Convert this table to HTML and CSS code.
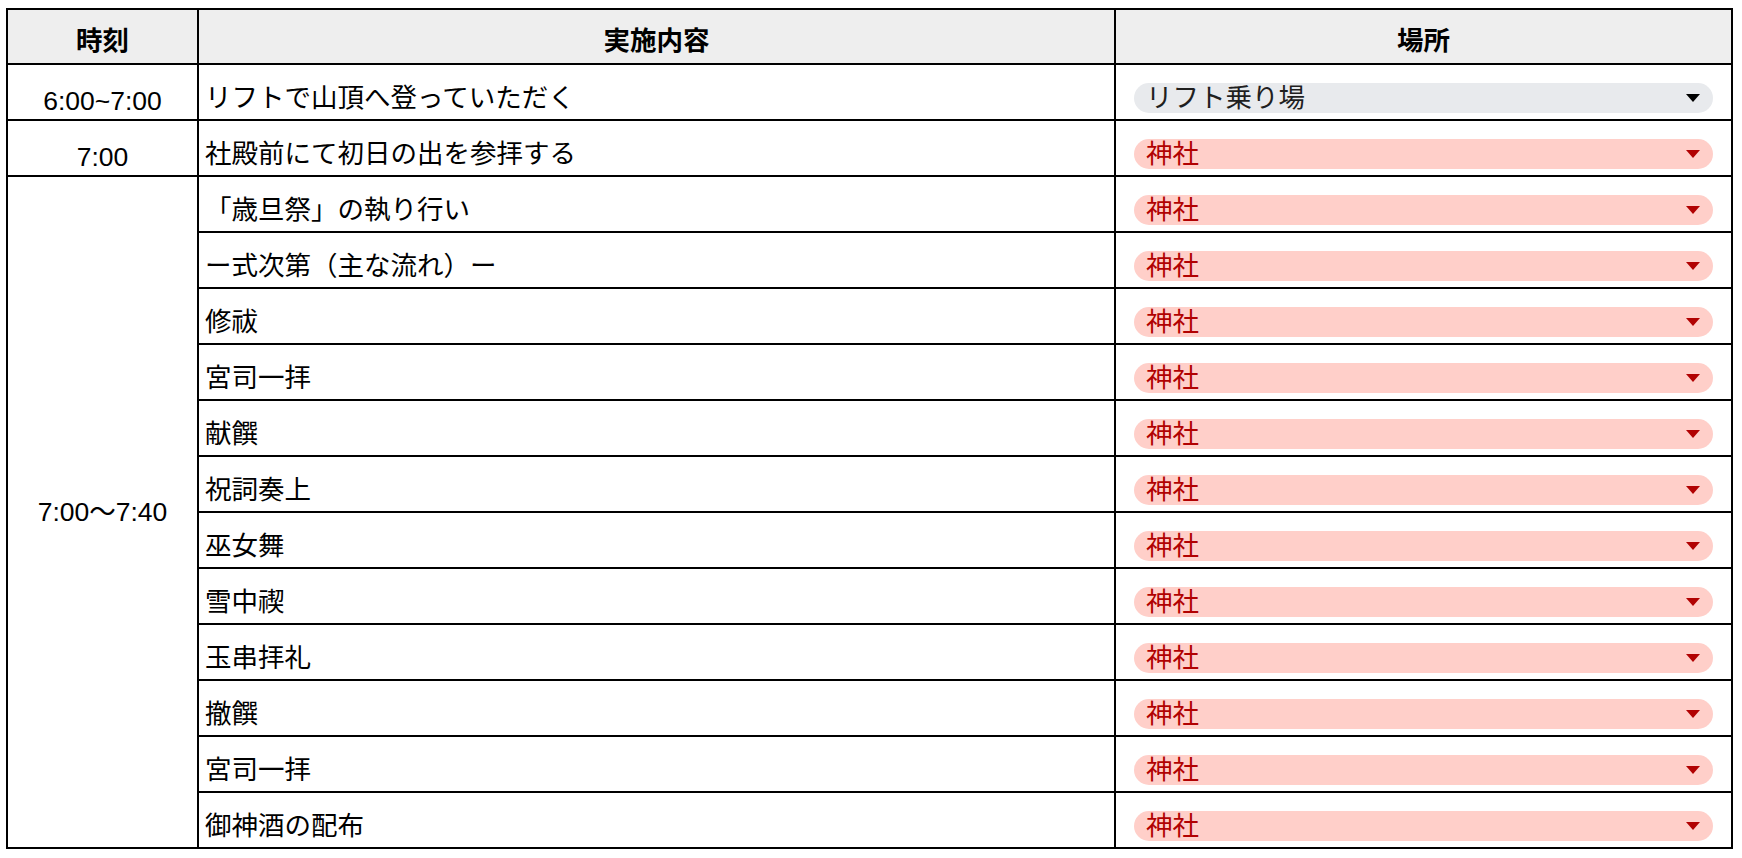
FILE: index.html
```html
<!DOCTYPE html>
<html lang="ja">
<head>
<meta charset="utf-8">
<title>スケジュール</title>
<link rel="stylesheet" href="styles.css">
</head>
<body>
<table class="schedule">
  <colgroup>
    <col class="c-time">
    <col class="c-content">
    <col class="c-place">
  </colgroup>
  <thead>
    <tr><th>時刻</th><th>実施内容</th><th>場所</th></tr>
  </thead>
  <tbody>
    <tr>
      <td class="time">6:00~7:00</td>
      <td class="content">リフトで山頂へ登っていただく</td>
      <td class="place"><div class="chip chip-grey"><span>リフト乗り場</span><i class="arrow"></i></div></td>
    </tr>
    <tr>
      <td class="time">7:00</td>
      <td class="content">社殿前にて初日の出を参拝する</td>
      <td class="place"><div class="chip chip-red"><span>神社</span><i class="arrow"></i></div></td>
    </tr>
    <tr>
      <td class="time time-span" rowspan="12">7:00〜7:40</td>
      <td class="content">「歳旦祭」の執り行い</td>
      <td class="place"><div class="chip chip-red"><span>神社</span><i class="arrow"></i></div></td>
    </tr>
    <tr>
      <td class="content">ー式次第（主な流れ）ー</td>
      <td class="place"><div class="chip chip-red"><span>神社</span><i class="arrow"></i></div></td>
    </tr>
    <tr>
      <td class="content">修祓</td>
      <td class="place"><div class="chip chip-red"><span>神社</span><i class="arrow"></i></div></td>
    </tr>
    <tr>
      <td class="content">宮司一拝</td>
      <td class="place"><div class="chip chip-red"><span>神社</span><i class="arrow"></i></div></td>
    </tr>
    <tr>
      <td class="content">献饌</td>
      <td class="place"><div class="chip chip-red"><span>神社</span><i class="arrow"></i></div></td>
    </tr>
    <tr>
      <td class="content">祝詞奏上</td>
      <td class="place"><div class="chip chip-red"><span>神社</span><i class="arrow"></i></div></td>
    </tr>
    <tr>
      <td class="content">巫女舞</td>
      <td class="place"><div class="chip chip-red"><span>神社</span><i class="arrow"></i></div></td>
    </tr>
    <tr>
      <td class="content">雪中禊</td>
      <td class="place"><div class="chip chip-red"><span>神社</span><i class="arrow"></i></div></td>
    </tr>
    <tr>
      <td class="content">玉串拝礼</td>
      <td class="place"><div class="chip chip-red"><span>神社</span><i class="arrow"></i></div></td>
    </tr>
    <tr>
      <td class="content">撤饌</td>
      <td class="place"><div class="chip chip-red"><span>神社</span><i class="arrow"></i></div></td>
    </tr>
    <tr>
      <td class="content">宮司一拝</td>
      <td class="place"><div class="chip chip-red"><span>神社</span><i class="arrow"></i></div></td>
    </tr>
    <tr>
      <td class="content">御神酒の配布</td>
      <td class="place"><div class="chip chip-red"><span>神社</span><i class="arrow"></i></div></td>
    </tr>
  </tbody>
</table>
</body>
</html>
```

FILE: styles.css
```css
html, body {
  margin: 0;
  padding: 0;
  background: #ffffff;
}

body {
  padding: 8px 0 0 6px;
  font-family: "Liberation Sans", "Noto Sans CJK JP", sans-serif;
  font-size: 26.5px;
  color: #000000;
}

.schedule {
  width: 1727px;
  table-layout: fixed;
  border-collapse: separate;
  border-spacing: 0;
  border-left: 2px solid #000;
  border-top: 2px solid #000;
}

.c-time { width: 191px; }
.c-content { width: 917px; }
.c-place { width: 617px; }

.schedule th,
.schedule td {
  border-right: 2px solid #000;
  border-bottom: 2px solid #000;
  line-height: 30px;
  vertical-align: middle;
  white-space: nowrap;
  overflow: hidden;
}

.schedule th {
  height: 45px;
  padding: 8px 9px 0 9px;
  background: #eeeeee;
  font-weight: bold;
  text-align: center;
}

.schedule td {
  height: 43px;
  padding: 11px 6px 0 6px;
}

.schedule td.time {
  height: 36px;
  padding-top: 18px;
  text-align: center;
}

.schedule td.time-span {
  padding-top: 0;
}

.schedule td.content {
  text-align: left;
}

.schedule td.place {
  padding: 11px 18px 0 18px;
}

.chip {
  display: flex;
  align-items: center;
  justify-content: space-between;
  height: 30px;
  border-radius: 15px;
  padding: 0 13px 0 12px;
  line-height: 30px;
}

.chip-grey {
  background: #e8eaed;
  color: #1f1f1f;
}

.chip-red {
  background: #ffcfc9;
  color: #b10202;
}

.arrow {
  width: 0;
  height: 0;
  border-left: 7px solid transparent;
  border-right: 7px solid transparent;
  border-top: 8px solid currentColor;
}

.chip-grey .arrow {
  border-top-color: #000;
}
```
